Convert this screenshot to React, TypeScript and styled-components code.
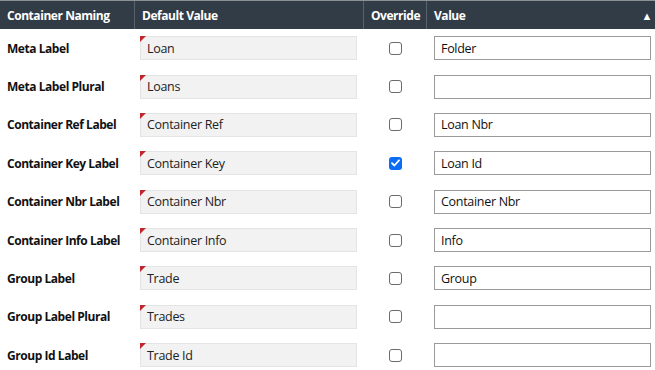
import React from "react";
import styled, { createGlobalStyle } from "styled-components";

const Global = createGlobalStyle`
  html, body { margin: 0; padding: 0; background: #fff; }
  body { font-family: "Open Sans", "Noto Sans", sans-serif; }
`;

const Table = styled.div`
  width: 655px;
  display: flex;
  flex-direction: column;
`;

const HeaderRow = styled.div`
  display: grid;
  grid-template-columns: 135px 229px 63px 1fr;
  height: 28px;
  background: #323c46;
  border-top: 1px solid #8c9196;
`;

const HeadCell = styled.div<{ $last?: boolean }>`
  display: flex;
  align-items: center;
  justify-content: space-between;
  padding: 0 7px;
  color: #fff;
  font-weight: 700;
  font-size: 12px;
  letter-spacing: -0.45px;
  border-right: ${(p) => (p.$last ? "none" : "1px solid #59636d")};
  white-space: nowrap;
`;

const SortArrow = styled.span`
  font-size: 11px;
  color: #fff;
  margin-right: -4px;
  line-height: 1;
`;

const Row = styled.div`
  display: grid;
  grid-template-columns: 135px 229px 63px 1fr;
  height: 38.375px;
  align-items: center;
`;

const LabelCell = styled.div`
  padding-left: 7px;
  font-weight: 700;
  font-size: 12px;
  letter-spacing: -0.45px;
  color: #111;
  white-space: nowrap;
`;

const DefaultCell = styled.div`
  padding: 0 7px 0 5px;
`;

const DefaultBox = styled.div`
  position: relative;
  height: 22px;
  background: #f2f2f2;
  border: 1px solid #e4e4e4;
  display: flex;
  align-items: center;
  padding-left: 6px;
  font-size: 12.5px;
  letter-spacing: -0.3px;
  color: #222;
  &::before {
    content: "";
    position: absolute;
    left: -1px;
    top: -1px;
    border-top: 6px solid #c0272d;
    border-right: 6px solid transparent;
  }
`;

const CheckCell = styled.div`
  display: flex;
  justify-content: center;
`;

const Box = styled.span<{ $checked?: boolean }>`
  width: 13px;
  height: 13px;
  box-sizing: border-box;
  border-radius: 3px;
  border: ${(p) => (p.$checked ? "none" : "1px solid #6b6b6b")};
  background: ${(p) => (p.$checked ? "#0b6cf5" : "#fff")};
  display: flex;
  align-items: center;
  justify-content: center;
`;

const ValueCell = styled.div`
  padding: 0 4px 0 7px;
`;

const ValueBox = styled.div`
  height: 22px;
  border: 1px solid #9a9a9a;
  background: #fff;
  display: flex;
  align-items: center;
  padding-left: 6px;
  font-size: 12.5px;
  letter-spacing: -0.3px;
  color: #111;
`;

const rows = [
  ["Meta Label", "Loan", false, "Folder"],
  ["Meta Label Plural", "Loans", false, ""],
  ["Container Ref Label", "Container Ref", false, "Loan Nbr"],
  ["Container Key Label", "Container Key", true, "Loan Id"],
  ["Container Nbr Label", "Container Nbr", false, "Container Nbr"],
  ["Container Info Label", "Container Info", false, "Info"],
  ["Group Label", "Trade", false, "Group"],
  ["Group Label Plural", "Trades", false, ""],
  ["Group Id Label", "Trade Id", false, ""],
] as const;

export default function App() {
  return (
    <>
      <Global />
      <Table>
        <HeaderRow>
          <HeadCell>Container Naming</HeadCell>
          <HeadCell>Default Value</HeadCell>
          <HeadCell>Override</HeadCell>
          <HeadCell $last>
            Value<SortArrow>▲</SortArrow>
          </HeadCell>
        </HeaderRow>
        {rows.map(([label, def, checked, value]) => (
          <Row key={label}>
            <LabelCell>{label}</LabelCell>
            <DefaultCell>
              <DefaultBox>{def}</DefaultBox>
            </DefaultCell>
            <CheckCell>
              <Box $checked={checked}>
                {checked && (
                  <svg width="9" height="8" viewBox="0 0 9 8">
                    <path d="M1 4.2 L3.4 6.5 L8 1.3" fill="none" stroke="#fff" strokeWidth="1.8" strokeLinecap="round" strokeLinejoin="round" />
                  </svg>
                )}
              </Box>
            </CheckCell>
            <ValueCell>
              <ValueBox>{value}</ValueBox>
            </ValueCell>
          </Row>
        ))}
      </Table>
    </>
  );
}
